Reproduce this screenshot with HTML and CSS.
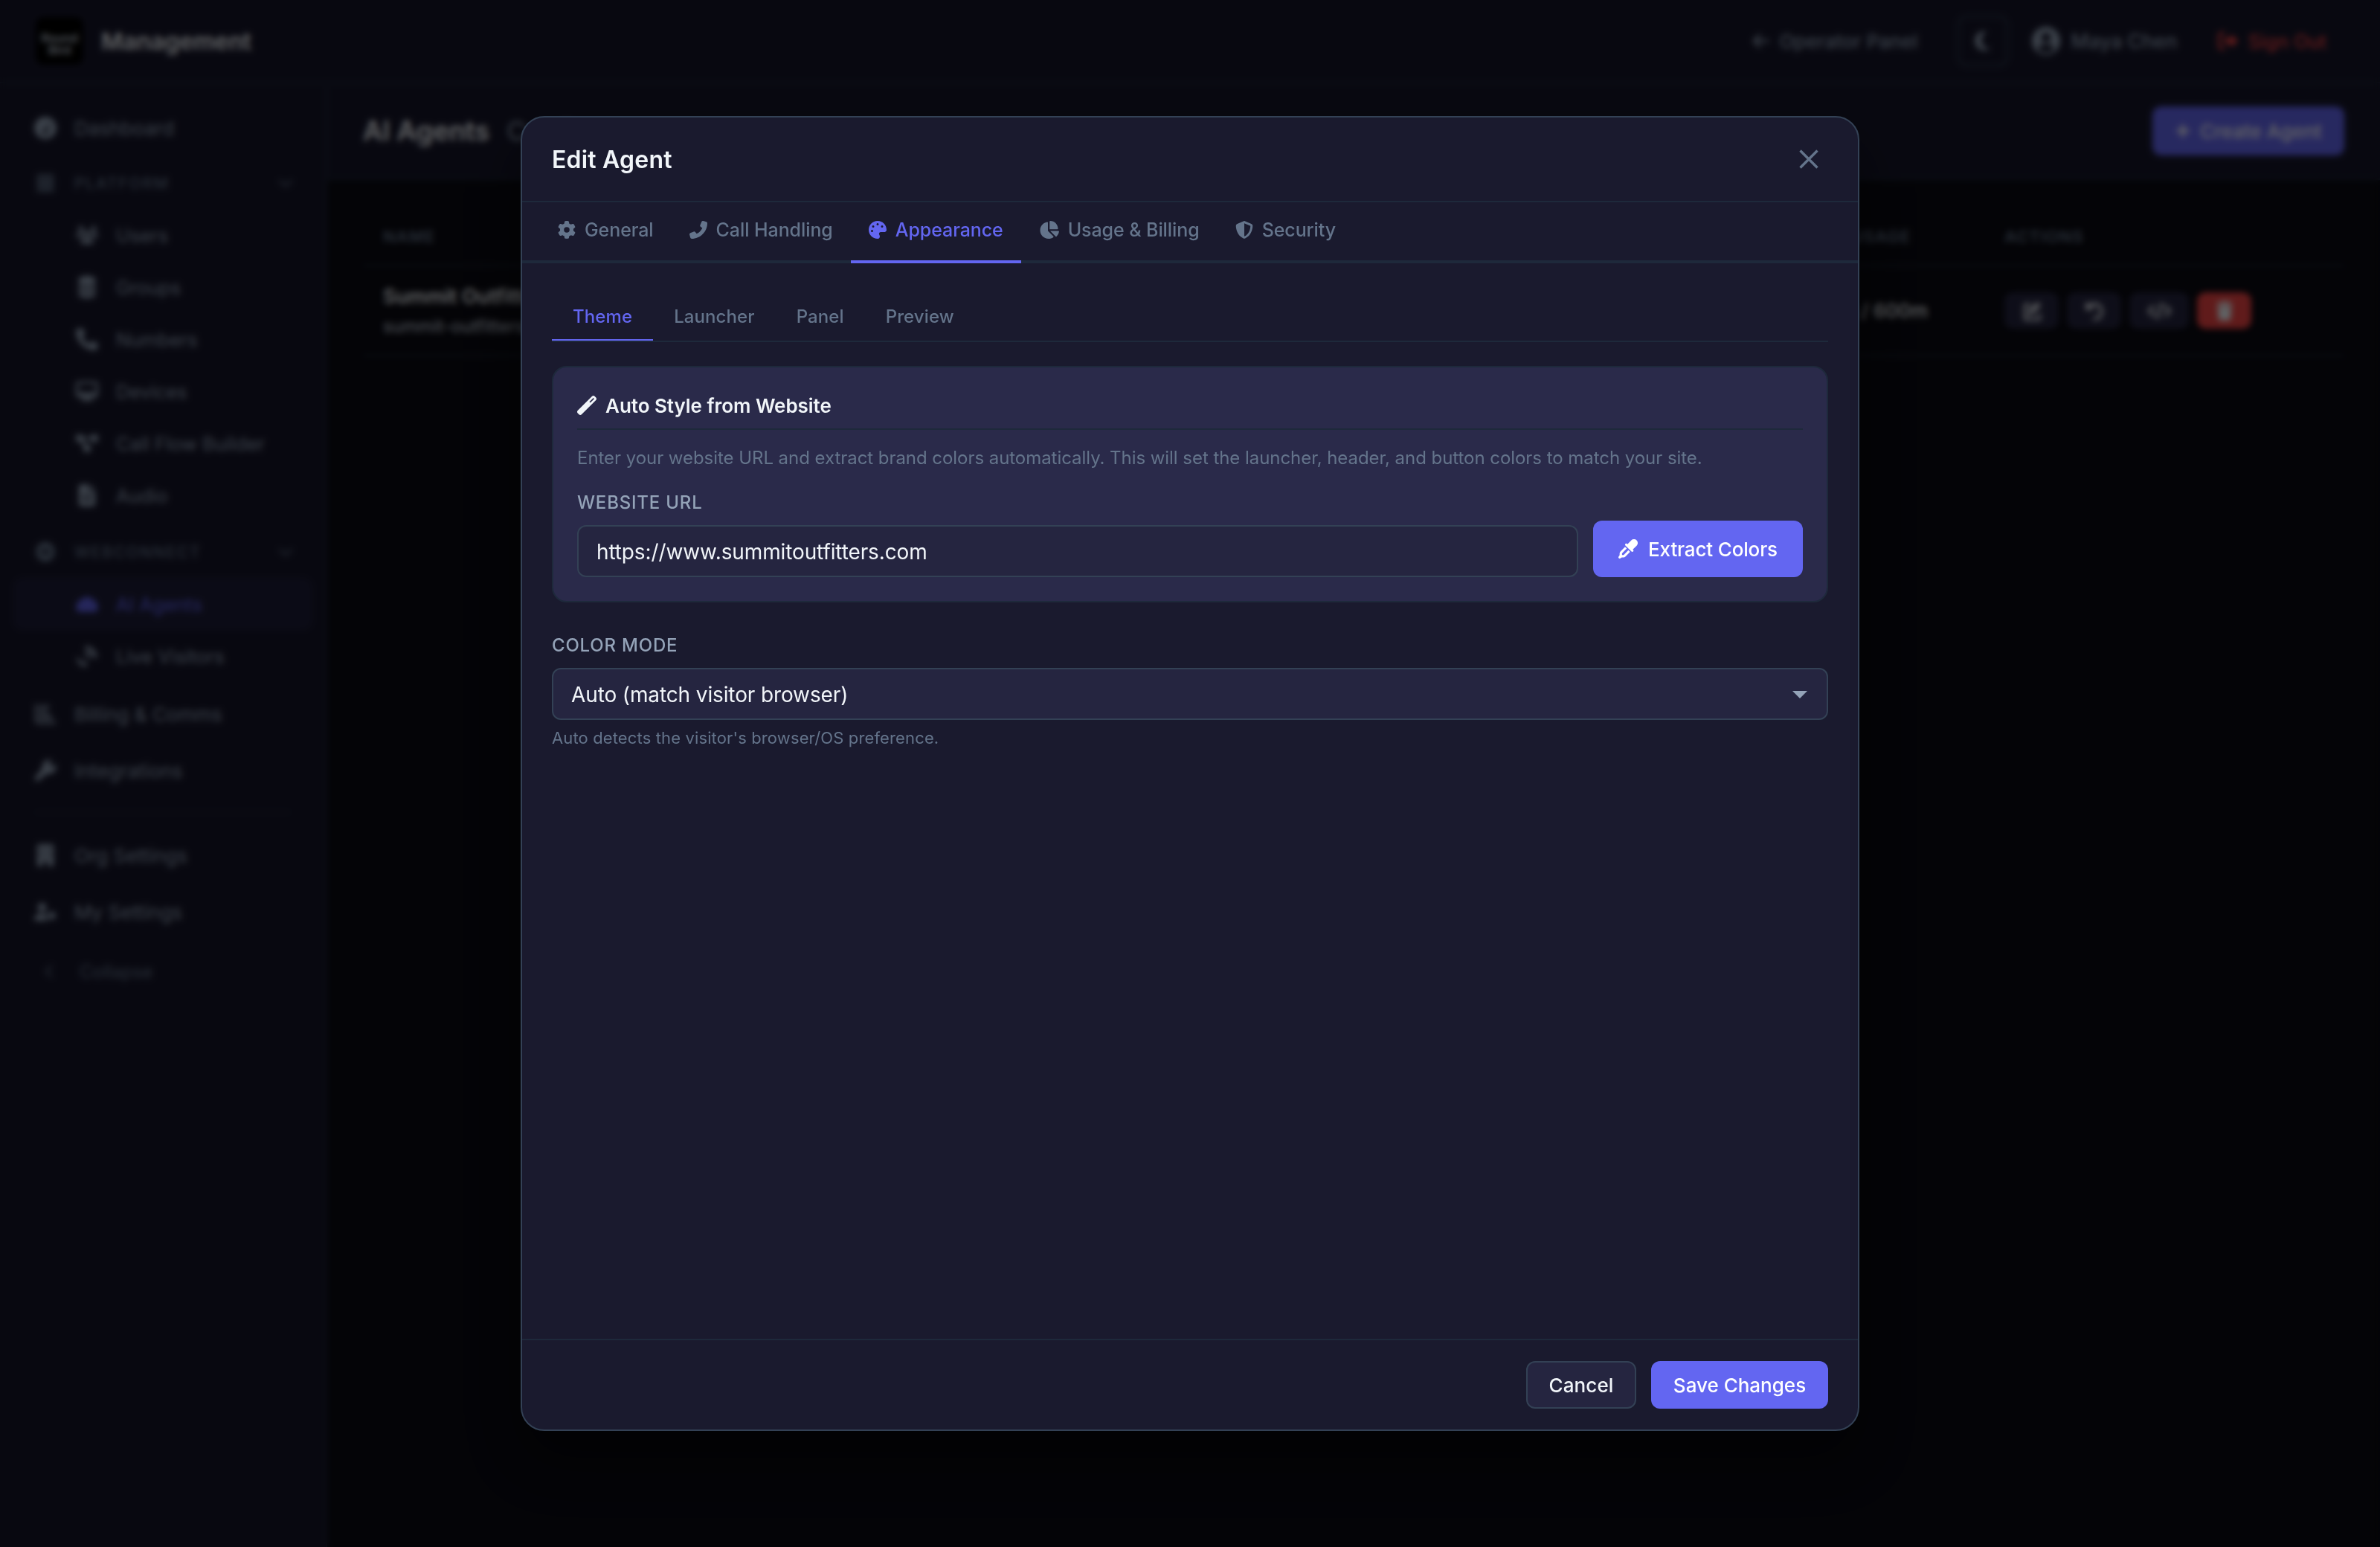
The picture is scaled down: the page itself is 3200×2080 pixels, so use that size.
FILE: index.html
```html
<!DOCTYPE html>
<html lang="en">

<head>
    <meta charset="UTF-8">
    <meta name="viewport" content="width=device-width, initial-scale=1.0">
    <title>Management - AI Agents</title>
    <link rel="stylesheet" href="styles.css">
</head>

<body>
    <!-- icons -->
    <svg class="sprite">
        <symbol id="i-gear" viewBox="0 0 512 512"><path d="M495.9 166.6c3.2 8.7 .5 18.4-6.4 24.6l-43.3 39.4c1.1 8.3 1.7 16.8 1.7 25.4s-.6 17.1-1.7 25.4l43.3 39.4c6.9 6.2 9.6 15.9 6.4 24.6c-4.4 11.9-9.7 23.3-15.8 34.3l-4.7 8.1c-6.6 11-14 21.4-22.1 31.2c-5.9 7.2-15.7 9.6-24.5 6.8l-55.7-17.7c-13.4 10.3-28.2 18.9-44 25.4l-12.5 57.1c-2 9.1-9 16.3-18.2 17.8c-13.8 2.3-28 3.5-42.5 3.5s-28.7-1.2-42.5-3.5c-9.2-1.5-16.2-8.7-18.2-17.8l-12.5-57.1c-15.8-6.5-30.6-15.1-44-25.4L83.1 425.9c-8.8 2.8-18.6 .3-24.5-6.8c-8.1-9.8-15.5-20.2-22.1-31.2l-4.7-8.1c-6.1-11-11.4-22.4-15.8-34.3c-3.2-8.7-.5-18.4 6.4-24.6l43.3-39.4C64.6 273.1 64 264.6 64 256s.6-17.1 1.7-25.4L22.4 191.2c-6.9-6.2-9.6-15.9-6.4-24.6c4.4-11.9 9.7-23.3 15.8-34.3l4.7-8.1c6.6-11 14-21.4 22.1-31.2c5.9-7.2 15.7-9.6 24.5-6.8l55.7 17.7c13.4-10.3 28.2-18.9 44-25.4l12.5-57.1c2-9.1 9-16.3 18.2-17.8C227.3 1.2 241.5 0 256 0s28.7 1.2 42.5 3.5c9.2 1.5 16.2 8.7 18.2 17.8l12.5 57.1c15.8 6.5 30.6 15.1 44 25.4l55.7-17.7c8.8-2.8 18.6-.3 24.5 6.8c8.1 9.8 15.5 20.2 22.1 31.2l4.7 8.1c6.1 11 11.4 22.4 15.8 34.3zM256 336a80 80 0 1 0 0-160 80 80 0 1 0 0 160z"/></symbol>
        <symbol id="i-phone" viewBox="0 0 512 512"><path d="M164.9 24.6c-7.7-18.6-28-28.5-47.4-23.2l-88 24C12.1 30.2 0 46 0 64C0 311.4 200.6 512 448 512c18 0 33.8-12.1 38.6-29.5l24-88c5.3-19.4-4.6-39.7-23.2-47.4l-96-40c-16.3-6.8-35.2-2.1-46.3 11.6L304.7 368C234.3 334.7 177.3 277.7 144 207.3L193.3 167c13.7-11.2 18.4-30 11.6-46.3l-40-96z"/></symbol>
        <symbol id="i-palette" viewBox="0 0 512 512"><path d="M512 256c0 .9 0 1.8 0 2.7c-.4 36.5-33.6 61.3-70.1 61.3L344 320c-26.5 0-48 21.5-48 48c0 3.4 .4 6.7 1 9.9c2.1 10.2 6.5 20 10.8 29.9c6.1 13.8 12.1 27.5 12.1 42c0 31.8-21.6 60.7-53.4 62c-3.5 .1-7 .2-10.6 .2C114.6 512 0 397.4 0 256S114.6 0 256 0S512 114.6 512 256zM128 288a32 32 0 1 0 -64 0 32 32 0 1 0 64 0zm0-96a32 32 0 1 0 0-64 32 32 0 1 0 0 64zM288 96a32 32 0 1 0 -64 0 32 32 0 1 0 64 0zm96 96a32 32 0 1 0 0-64 32 32 0 1 0 0 64z"/></symbol>
        <symbol id="i-pie" viewBox="0 0 576 512"><path d="M304 240l0-223.4c0-9 7-16.6 16-16.6C443.7 0 544 100.3 544 224c0 9-7.6 16-16.6 16L304 240zM32 272C32 150.7 122.1 50.3 239 34.3c9.2-1.3 17 6.1 17 15.4L256 288 412.5 444.5c6.7 6.7 6.2 17.7-1.5 23.1C371.8 495.6 323.8 512 272 512C139.5 512 32 404.6 32 272zm526.4 16c9.3 0 16.6 7.8 15.4 17c-7.7 55.9-34.6 105.6-73.9 142.3c-6 5.6-15.4 5.2-21.2-.7L320 288l238.4 0z"/></symbol>
        <symbol id="i-shield" viewBox="0 0 512 512"><path d="M256 0c4.6 0 9.2 1 13.4 2.9L457.7 82.8c22 9.3 38.4 31 38.3 57.2c-.5 99.2-41.3 280.7-213.6 363.2c-16.7 8-36.1 8-52.8 0C57.3 420.7 16.5 239.2 16 140c-.1-26.2 16.3-47.9 38.3-57.2L242.7 2.9C246.8 1 251.4 0 256 0zm0 66.8l0 378.1C394 378 431.1 230.1 432 141.4L256 66.8z"/></symbol>
        <symbol id="i-wand" viewBox="0 0 512 512"><path d="M14.1 463.3c-18.7-18.7-18.7-49.1 0-67.9L395.4 14.1c18.7-18.7 49.1-18.7 67.9 0l34.6 34.6c18.7 18.7 18.7 49.1 0 67.9L116.5 497.9c-18.7 18.7-49.1 18.7-67.9 0L14.1 463.3zM347.6 187.6l105-105L429.4 59.3l-105 105 23.3 23.3z"/></symbol>
        <symbol id="i-dropper" viewBox="0 0 512 512"><path d="M341.6 29.2L240.1 130.8l-9.4-9.4c-12.5-12.5-32.8-12.5-45.3 0s-12.5 32.8 0 45.3l160 160c12.5 12.5 32.8 12.5 45.3 0s12.5-32.8 0-45.3l-9.4-9.4L482.8 170.4c39-39 39-102.2 0-141.1s-102.2-39-141.1 0zM55.4 323.3c-15 15-23.4 35.4-23.4 56.6l0 42.4L5.4 462.2c-8.5 12.7-6.8 29.6 4 40.4s27.7 12.5 40.4 4L89.7 480l42.4 0c21.2 0 41.6-8.4 56.6-23.4L309.4 335.9l-45.3-45.3L143.4 411.3c-3 3-7.1 4.7-11.3 4.7L96 416l0-36.1c0-4.2 1.7-8.3 4.7-11.3L221.4 247.9l-45.3-45.3L55.4 323.3z"/></symbol>
        <symbol id="i-gauge" viewBox="0 0 512 512"><path fill-rule="evenodd" d="M0 256a256 256 0 1 1 512 0A256 256 0 1 1 0 256zM256 400a50 50 0 0 0 30-90l70-120a18 18 0 0 0-32-20l-76 124a50 50 0 0 0 8 106z"/></symbol>
        <symbol id="i-server" viewBox="0 0 512 512"><path d="M64 32h384a40 40 0 0 1 40 40v60H24V72a40 40 0 0 1 40-40zM24 190h464v132H24zM24 380h464v60a40 40 0 0 1-40 40H64a40 40 0 0 1-40-40z"/></symbol>
        <symbol id="i-users" viewBox="0 0 640 512"><path d="M144 0a80 80 0 1 1 0 160A80 80 0 1 1 144 0zM512 0a80 80 0 1 1 0 160A80 80 0 1 1 512 0zM0 299c0-59 48-107 107-107h43c16 0 31 4 45 10a128 128 0 0 0 42 118H21c-12 0-21-10-21-21zM405 320a128 128 0 0 0 41-118c14-6 29-10 45-10h43c59 0 106 48 106 107 0 11-9 21-21 21zM224 224a96 96 0 1 1 192 0 96 96 0 1 1-192 0zM128 485c0-73 60-133 133-133h118c73 0 133 60 133 133 0 15-12 27-27 27H155c-15 0-27-12-27-27z"/></symbol>
        <symbol id="i-layers" viewBox="0 0 512 512"><path d="M256 0c120 0 200 40 200 90v40c0 50-80 90-200 90S56 180 56 130V90C56 40 136 0 256 0zM56 200c40 40 120 60 200 60s160-20 200-60v80c0 50-80 90-200 90S56 330 56 280zM56 350c40 40 120 60 200 60s160-20 200-60v72c0 50-80 90-200 90S56 472 56 422z"/></symbol>
        <symbol id="i-monitor" viewBox="0 0 576 512"><path fill-rule="evenodd" d="M64 0C29 0 0 29 0 64v288c0 35 29 64 64 64h176l-11 32h-69a32 32 0 1 0 0 64h256a32 32 0 1 0 0-64h-69l-11-32h176c35 0 64-29 64-64V64c0-35-29-64-64-64zM512 64v224H64V64z"/></symbol>
        <symbol id="i-flow" viewBox="0 0 576 512"><path d="M0 80c0-26 22-48 48-48h96c26 0 48 22 48 48v16h192V80c0-26 22-48 48-48h96c26 0 48 22 48 48v96c0 26-22 48-48 48h-96c-26 0-48-22-48-48v-16H192v7l66 121h78c26 0 48 22 48 48v96c0 26-22 48-48 48h-96c-26 0-48-22-48-48v-90L128 224H48c-26 0-48-22-48-48z"/></symbol>
        <symbol id="i-file" viewBox="0 0 512 512"><path fill-rule="evenodd" d="M64 64C64 29 93 0 128 0h160v128c0 18 14 32 32 32h128v288c0 35-29 64-64 64H128c-35 0-64-29-64-64zM320 0l128 128H320zM150 250v40h210v-40zM150 350v40h210v-40z"/></symbol>
        <symbol id="i-globe" viewBox="0 0 512 512"><path fill-rule="evenodd" d="M256 0a256 256 0 1 1 0 512 256 256 0 1 1 0-512zM170 190v130h172V190zM40 180v20h90v-20zM40 310v20h90v-20zM382 180v20h90v-20zM382 310v20h90v-20z"/></symbol>
        <symbol id="i-robot" viewBox="0 0 640 512"><path fill-rule="evenodd" d="M320 20c20 0 34 14 34 32v44h90c50 0 84 36 90 90 60 10 90 50 90 120v90c0 50-30 86-80 86H96c-50 0-80-36-80-86v-90c0-70 30-110 90-120 6-54 40-90 90-90h90V52c0-18 14-32 34-32zM210 250a34 34 0 1 0 .1 0zM430 250a34 34 0 1 0 .1 0z"/></symbol>
        <symbol id="i-live" viewBox="0 0 512 512"><path d="M210 20C370 20 492 142 492 300h-90c0-108-84-190-192-190zM210 160c80 0 140 60 140 140h-84c0-32-24-56-56-56zM20 270l150 150 50-40 60 60-60 60C100 500 10 410 20 270z"/></symbol>
        <symbol id="i-bill" viewBox="0 0 512 512"><path d="M20 32h56v360c0 18 14 32 32 32h384v56H90c-40 0-70-30-70-70zM120 60h230v60H120zM120 170h180v60H120zM120 280h290v80H120z"/></symbol>
        <symbol id="i-plug" viewBox="0 0 512 512"><path d="M340 10a160 160 0 0 1 70 12l-50 50v80h80l50-50a160 160 0 0 1-190 222L110 480a56 56 0 0 1-80-80L186 204A160 160 0 0 1 340 10z"/></symbol>
        <symbol id="i-org" viewBox="0 0 512 512"><path fill-rule="evenodd" d="M64 48c0-26 22-48 48-48h288c26 0 48 22 48 48v440c0 14-10 24-24 24H310v-80a54 54 0 0 0-108 0v80H88c-14 0-24-10-24-24zM140 100v56h56v-56zM316 100v56h56v-56zM140 230v56h56v-56zM316 230v56h56v-56z"/></symbol>
        <symbol id="i-usergear" viewBox="0 0 640 512"><path d="M224 0a128 128 0 1 1 0 256 128 128 0 1 1 0-256zM0 482c0-98 80-178 178-178h92c30 0 60 8 84 22-20 60 0 130 40 186H30c-16 0-30-14-30-30zM500 240l110 60v120l-110 70-100-70V300z"/></symbol>
        <symbol id="i-down" viewBox="0 0 512 512"><path d="M40 170l216 190 216-190" fill="none" stroke="currentColor" stroke-width="56"/></symbol>
        <symbol id="i-left" viewBox="0 0 512 512"><path d="M350 60L150 256l200 196" fill="none" stroke="currentColor" stroke-width="56"/></symbol>
        <symbol id="i-arrow" viewBox="0 0 512 512"><path d="M480 256H50M230 70L50 256l180 186" fill="none" stroke="currentColor" stroke-width="66"/></symbol>
        <symbol id="i-moon" viewBox="0 0 512 512"><path d="M290 20C150 20 60 130 60 256s100 236 230 236c60 0 110-20 150-60-140 10-220-70-220-186 0-90 50-170 130-210-20-10-40-16-60-16z"/></symbol>
        <symbol id="i-user" viewBox="0 0 512 512"><path fill-rule="evenodd" d="M256 0a256 256 0 1 1 0 512 256 256 0 1 1 0-512zM256 110a86 86 0 1 0 .1 0zM110 400c30 40 90 64 146 64s116-24 146-64c-16-50-60-80-110-80h-72c-50 0-94 30-110 80z"/></symbol>
        <symbol id="i-out" viewBox="0 0 512 512"><path d="M170 32v64H96c-18 0-32 14-32 32v256c0 18 14 32 32 32h74v64H96c-54 0-96-42-96-96V128c0-54 42-96 96-96zM320 90l180 166-180 166v-96H160V186h160z"/></symbol>
        <symbol id="i-plus" viewBox="0 0 512 512"><path d="M256 50v412M50 256h412" stroke="currentColor" stroke-width="84"/></symbol>
        <symbol id="i-edit" viewBox="0 0 512 512"><path d="M400 20l92 92-230 230-110 24 22-112zM40 110c0-30 20-50 50-50h140v64H104v324h324V330h64v132c0 30-20 50-50 50H90c-30 0-50-20-50-50z"/></symbol>
        <symbol id="i-undo" viewBox="0 0 512 512"><path d="M60 40v150h150M80 180C140 80 260 50 350 100c110 60 130 220 50 310-50 50-110 64-180 50" fill="none" stroke="currentColor" stroke-width="70"/></symbol>
        <symbol id="i-code" viewBox="0 0 640 512"><path d="M180 110L40 256l140 146M460 110l140 146-140 146M380 40L260 472" fill="none" stroke="currentColor" stroke-width="66"/></symbol>
        <symbol id="i-trash" viewBox="0 0 448 512"><path d="M140 0h168l20 32h100v64H20V32h100zM40 128h368l-22 340c-2 26-22 44-48 44H110c-26 0-46-18-48-44z"/></symbol>
    </svg>

    <header class="topbar">
        <div class="logo"><span>Round</span><span>Bird</span></div>
        <div class="brand">Management</div>
        <div class="toplink"><svg><use href="#i-arrow"/></svg>Operator Panel</div>
        <div class="themebtn"><svg><use href="#i-moon"/></svg></div>
        <div class="account"><svg><use href="#i-user"/></svg>Maya Chen</div>
        <div class="signout"><svg><use href="#i-out"/></svg>Sign Out</div>
    </header>

    <div class="shell">
        <nav class="sidebar">
            <div class="item"><svg><use href="#i-gauge"/></svg>Dashboard</div>
            <div class="section"><svg><use href="#i-server"/></svg>PLATFORM<svg class="chev"><use href="#i-down"/></svg></div>
            <div class="sub"><svg><use href="#i-users"/></svg>Users</div>
            <div class="sub"><svg><use href="#i-layers"/></svg>Groups</div>
            <div class="sub"><svg><use href="#i-phone"/></svg>Numbers</div>
            <div class="sub"><svg><use href="#i-monitor"/></svg>Devices</div>
            <div class="sub"><svg><use href="#i-flow"/></svg>Call Flow Builder</div>
            <div class="sub"><svg><use href="#i-file"/></svg>Audio</div>
            <div class="section second"><svg><use href="#i-globe"/></svg>WEBCONNECT<svg class="chev"><use href="#i-down"/></svg></div>
            <div class="sub active"><svg><use href="#i-robot"/></svg>AI Agents</div>
            <div class="sub"><svg><use href="#i-live"/></svg>Live Visitors</div>
            <div class="item billing"><svg><use href="#i-bill"/></svg>Billing &amp; Comms</div>
            <div class="item"><svg><use href="#i-plug"/></svg>Integrations</div>
            <div class="navline"></div>
            <div class="item"><svg><use href="#i-org"/></svg>Org Settings</div>
            <div class="item"><svg><use href="#i-usergear"/></svg>My Settings</div>
            <div class="collapse"><svg><use href="#i-left"/></svg>Collapse</div>
        </nav>

        <main class="main">
            <div class="pagehead">
                <h1>AI Agents</h1>
                <span class="pagesub">Configure</span>
                <div class="create"><svg><use href="#i-plus"/></svg>Create Agent</div>
            </div>
            <div class="table">
                <div class="tr th">
                    <div>NAME</div>
                    <div class="usage">USAGE</div>
                    <div>ACTIONS</div>
                </div>
                <div class="tr">
                    <div>
                        <div class="agentname">Summit Outfitters</div>
                        <div class="agentslug">summit-outfitters</div>
                    </div>
                    <div class="usage used">0m / 600m</div>
                    <div class="actions">
                        <span class="act"><svg><use href="#i-edit"/></svg></span>
                        <span class="act"><svg><use href="#i-undo"/></svg></span>
                        <span class="act wide"><svg><use href="#i-code"/></svg></span>
                        <span class="act danger"><svg><use href="#i-trash"/></svg></span>
                    </div>
                </div>
            </div>
        </main>
    </div>

    <div class="overlay">
        <div class="modal">
            <div class="modal-header">
                <h2>Edit Agent</h2>
                <svg class="close" viewBox="0 0 26 26"><path d="M1.5 1.5l23 23M24.5 1.5l-23 23"/></svg>
            </div>

            <div class="tabs">
                <div class="tab"><svg><use href="#i-gear"/></svg>General</div>
                <div class="tab"><svg class="flip"><use href="#i-phone"/></svg>Call Handling</div>
                <div class="tab active"><svg><use href="#i-palette"/></svg>Appearance</div>
                <div class="tab"><svg class="pie"><use href="#i-pie"/></svg>Usage &amp; Billing</div>
                <div class="tab"><svg><use href="#i-shield"/></svg>Security</div>
            </div>

            <div class="modal-body">
                <div class="subtabs">
                    <div class="subtab active">Theme</div>
                    <div class="subtab">Launcher</div>
                    <div class="subtab">Panel</div>
                    <div class="subtab">Preview</div>
                </div>

                <div class="card">
                    <h3><svg><use href="#i-wand"/></svg>Auto Style from Website</h3>
                    <p class="desc">Enter your website URL and extract brand colors automatically. This will set the launcher, header, and button colors to match your site.</p>
                    <div class="urlrow">
                        <div class="field">
                            <label class="label">WEBSITE URL</label>
                            <div class="input">https://www.summitoutfitters.com</div>
                        </div>
                        <div class="btn extract"><svg><use href="#i-dropper"/></svg>Extract Colors</div>
                    </div>
                </div>

                <label class="label">COLOR MODE</label>
                <div class="input select">Auto (match visitor browser)<svg viewBox="0 0 20 10"><path d="M0 0h20L10 10z"/></svg></div>
                <p class="hint">Auto detects the visitor's browser/OS preference.</p>
            </div>

            <div class="modal-footer">
                <div class="btn cancel">Cancel</div>
                <div class="btn save">Save Changes</div>
            </div>
        </div>
    </div>
</body>

</html>
```
FILE: styles.css
```css
* {
    box-sizing: border-box;
}

body {
    margin: 0;
    width: 3200px;
    height: 2080px;
    overflow: hidden;
    background-color: #0a0a12;
    color: #f1f5f9;
    font-family: Inter, 'Liberation Sans', sans-serif;
    font-size: 28px;
}

h1, h2, h3, p {
    margin: 0;
}

svg {
    fill: currentColor;
    flex: none;
}

.sprite {
    position: absolute;
    width: 0;
    height: 0;
}

/* top bar */
.topbar {
    display: flex;
    align-items: center;
    height: 112px;
    padding: 0 72px 0 48px;
    background-color: #16162a;
    border-bottom: 2px solid #1e293b;
    color: #94a3b8;
    font-size: 26px;
    font-weight: 500;
}

.logo {
    display: flex;
    flex-direction: column;
    align-items: center;
    justify-content: center;
    width: 64px;
    height: 64px;
    padding-top: 8px;
    border-radius: 10px;
    background-color: #000;
    color: #cbd5e1;
    font-size: 16px;
    line-height: 16px;
    font-weight: 600;
}

.brand {
    margin: 0 auto 0 24px;
    color: #f1f5f9;
    font-size: 31.8px;
    font-weight: 600;
}

.toplink, .account, .signout {
    display: flex;
    align-items: center;
}

.toplink svg {
    width: 24px;
    height: 24px;
    margin-right: 12px;
}

.themebtn {
    display: flex;
    align-items: center;
    justify-content: center;
    width: 68px;
    height: 68px;
    margin: 0 32px 0 54px;
    border: 2px solid #334155;
    border-radius: 12px;
}

.themebtn svg {
    width: 28px;
    height: 28px;
}

.account {
    font-size: 26.5px;
}

.account svg {
    width: 38px;
    height: 38px;
    margin-right: 14px;
}

.signout {
    margin-left: 55px;
    color: #ef4444;
    font-size: 25.8px;
}

.signout svg {
    width: 28px;
    height: 28px;
    margin-right: 12px;
}

/* sidebar */
.shell {
    display: flex;
    height: 1968px;
}

.sidebar {
    width: 440px;
    padding: 23px 18px;
    background-color: #16162a;
    border-right: 2px solid #1e293b;
    color: #94a3b8;
    font-size: 26px;
}

.item, .section, .sub, .collapse {
    display: flex;
    align-items: center;
    border-radius: 12px;
}

.item {
    height: 74px;
    margin-bottom: 2px;
    padding-left: 28px;
}

.item svg, .sub svg {
    width: 30px;
    height: 30px;
    margin-right: 24px;
}

.section {
    height: 70px;
    padding: 0 26px 0 30px;
    color: #64748b;
    font-size: 21px;
    font-weight: 500;
    letter-spacing: 1.8px;
}

.section.second {
    margin-top: 6px;
}

.section svg {
    width: 26px;
    height: 26px;
    margin-right: 26px;
}

.section .chev {
    width: 20px;
    height: 20px;
    margin: 0 0 0 auto;
}

.sub {
    height: 70px;
    padding-left: 84px;
    font-size: 25.4px;
}

.sub.active {
    background-color: #1d1d38;
    color: #6366f1;
}

.item.billing {
    margin-top: 6px;
}

.navline {
    height: 2px;
    margin: 18px 30px 20px;
    background-color: #1c2036;
}

.collapse {
    height: 82px;
    padding-left: 38px;
    color: #64748b;
    font-size: 24px;
}

.collapse svg {
    width: 20px;
    height: 20px;
    margin-right: 31px;
}

/* page behind the modal */
.main {
    flex: 1;
}

.pagehead {
    display: flex;
    align-items: center;
    height: 130px;
    padding: 0 48px;
    background-color: #16162a;
    border-bottom: 2px solid #1e293b;
}

.pagehead h1 {
    font-size: 36.3px;
    font-weight: 600;
}

.pagesub {
    margin-left: 23px;
    color: #94a3b8;
    font-size: 36px;
}

.create {
    display: flex;
    align-items: center;
    justify-content: center;
    width: 258px;
    height: 66px;
    margin: 0 0 0 auto;
    border-radius: 12px;
    background-color: #6366f1;
    color: #fff;
    font-size: 26px;
    font-weight: 500;
}

.create svg {
    width: 22px;
    height: 22px;
    margin-right: 12px;
}

.table {
    padding: 36px 48px;
}

.tr {
    display: grid;
    grid-template-columns: 1802px 378px 1fr;
    align-items: center;
    height: 121px;
    padding-left: 27px;
    border-bottom: 2px solid #1e293b;
}

.th {
    height: 80px;
    padding-top: 2px;
    color: #64748b;
    font-size: 22px;
    font-weight: 600;
    letter-spacing: 1px;
}

.usage {
    padding-right: 126px;
    text-align: right;
}

.used {
    padding-right: 103px;
    font-size: 26px;
    font-weight: 500;
}

.agentname {
    font-size: 27px;
    font-weight: 600;
    line-height: 42px;
}

.agentslug {
    font-size: 23.6px;
    line-height: 38px;
    color: #cbd5e1;
}

.actions {
    display: flex;
    gap: 11px;
}

.act {
    display: flex;
    align-items: center;
    justify-content: center;
    width: 73px;
    height: 49px;
    border-radius: 12px;
    background-color: #252540;
}

.act.wide {
    width: 80px;
}

.act.wide svg {
    width: 33px;
}

.act.danger {
    background-color: #ef4444;
}

.act svg {
    width: 26px;
    height: 26px;
}

/* modal */
.overlay {
    position: absolute;
    top: 0;
    left: 0;
    width: 3200px;
    height: 2080px;
    display: flex;
    align-items: center;
    justify-content: center;
    background-color: rgba(0, 0, 0, 0.6);
    backdrop-filter: blur(4px);
}

.modal {
    display: flex;
    flex-direction: column;
    width: 1800px;
    height: 1768px;
    border: 2px solid #334155;
    border-radius: 32px;
    background-color: #1a1a2e;
    box-shadow: 0 40px 80px rgba(0, 0, 0, 0.5);
    overflow: hidden;
}

.modal-header {
    display: flex;
    align-items: center;
    justify-content: space-between;
    height: 114px;
    padding: 0 53px 0 40px;
    border-bottom: 2px solid #1e293b;
}

.modal-header h2 {
    font-size: 32px;
    font-weight: 600;
    letter-spacing: 0.2px;
}

.close {
    width: 26px;
    height: 26px;
    fill: none;
    stroke: #64748b;
    stroke-width: 3.4;
}

.tabs {
    display: flex;
    height: 82px;
    padding: 0 24px;
    box-shadow: inset 0 -4px #1e293b;
}

.tab {
    display: flex;
    align-items: center;
    height: 82px;
    padding: 0 24px 4px;
    border-bottom: 4px solid transparent;
    color: #64748b;
    font-size: 25px;
    font-weight: 500;
    letter-spacing: -0.08px;
}

.tab svg {
    width: 24px;
    height: 24px;
    margin-right: 12px;
}

.tab .pie {
    width: 27px;
}

.tab .flip {
    transform: scaleX(-1);
}

.tab.active {
    border-bottom-color: #6366f1;
    color: #6366f1;
}

.modal-body {
    flex: 1;
    padding: 40px;
}

.subtabs {
    display: flex;
    height: 66px;
    margin-bottom: 32px;
    border-bottom: 2px solid #1e293b;
}

.subtab {
    display: flex;
    align-items: center;
    height: 64px;
    padding: 0 28px;
    border-bottom: 2px solid transparent;
    color: #64748b;
    font-size: 24px;
    font-weight: 500;
    letter-spacing: 0.1px;
}

.subtab.active {
    border-bottom-color: #6366f1;
    color: #6366f1;
}

.card {
    height: 318px;
    margin-bottom: 43px;
    padding: 32px;
    border: 2px solid #1e293b;
    border-radius: 20px;
    background-color: #2a2a4a;
}

.card h3 {
    display: flex;
    align-items: center;
    height: 52px;
    padding-bottom: 12px;
    border-bottom: 2px solid #1e293b;
    font-size: 26px;
    font-weight: 600;
    letter-spacing: -0.04px;
}

.card h3 svg {
    width: 26px;
    height: 26px;
    margin-right: 12px;
}

.desc {
    height: 83px;
    padding-top: 20px;
    color: #64748b;
    font-size: 24px;
    line-height: 36px;
    letter-spacing: -0.05px;
}

.urlrow {
    display: flex;
    align-items: flex-end;
    gap: 20px;
}

.field {
    flex: 1;
}

.label {
    display: block;
    height: 45px;
    color: #94a3b8;
    font-size: 24px;
    line-height: 30px;
    font-weight: 500;
    letter-spacing: 0.8px;
}

.input {
    display: flex;
    align-items: center;
    height: 70px;
    padding: 1px 24px 0;
    border: 2px solid #334155;
    border-radius: 12px;
    background-color: #252540;
    font-size: 28px;
    letter-spacing: -0.12px;
}

.select {
    justify-content: space-between;
    padding-right: 26px;
}

.select svg {
    width: 20px;
    height: 10px;
    color: #94a3b8;
}

.hint {
    padding-top: 8px;
    color: #64748b;
    font-size: 22px;
    line-height: 32px;
    letter-spacing: 0.13px;
}

.modal-footer {
    display: flex;
    justify-content: flex-end;
    gap: 20px;
    height: 122px;
    padding: 28px 40px;
    border-top: 2px solid #1e293b;
}

.btn {
    display: flex;
    align-items: center;
    justify-content: center;
    height: 64px;
    border-radius: 12px;
    background-color: #6366f1;
    color: #fff;
    font-size: 26px;
    font-weight: 500;
}

.extract {
    width: 282px;
    height: 76px;
    letter-spacing: -0.16px;
}

.extract svg {
    width: 26px;
    height: 26px;
    margin-right: 14px;
}

.cancel {
    width: 148px;
    border: 2px solid #334155;
    background-color: #252540;
    color: #f1f5f9;
    letter-spacing: 0.1px;
}

.save {
    width: 238px;
}
```
